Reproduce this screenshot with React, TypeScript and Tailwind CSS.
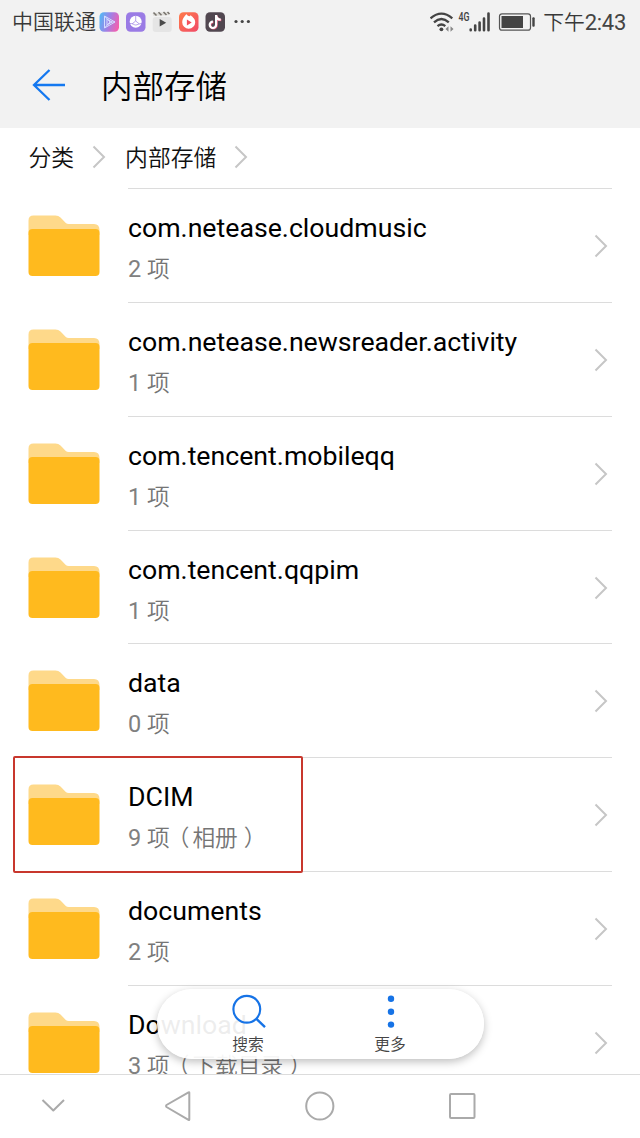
interface Folder {
  name: string;
  count: number;
  note?: string;
  highlighted?: boolean;
}

const folders: Folder[] = [
  { name: "com.netease.cloudmusic", count: 2 },
  { name: "com.netease.newsreader.activity", count: 1 },
  { name: "com.tencent.mobileqq", count: 1 },
  { name: "com.tencent.qqpim", count: 1 },
  { name: "data", count: 0 },
  { name: "DCIM", count: 9, note: "相册", highlighted: true },
  { name: "documents", count: 2 },
  { name: "Download", count: 3, note: "下载目录" },
];

function AppBadges() {
  return (
    <svg className="ml-[3px] h-[22px] w-[154px] shrink-0" viewBox="0 0 154 22">
      <defs>
        <linearGradient id="video" x1="0" x2="1" y1="0.3" y2="0.6">
          <stop offset="0" stopColor="#58b5f5" />
          <stop offset="0.5" stopColor="#a180e5" />
          <stop offset="1" stopColor="#f45fae" />
        </linearGradient>
        <linearGradient id="fire" x1="0" x2="1" y1="0" y2="1">
          <stop offset="0" stopColor="#ff7b49" />
          <stop offset="1" stopColor="#f04a68" />
        </linearGradient>
      </defs>
      <rect fill="url(#video)" height="19.5" rx="4.5" width="19.5" x="0.5" y="1.2" />
      <path d="M5.500 5v12l10.500-6zM8 8v6l5-3zM5.500 5l5.500 6-5.500 6M16 11h-5" fill="none" stroke="#d4dcff" strokeLinejoin="round" strokeWidth="1" />
      <rect fill="#9a7be5" height="19.5" rx="4.5" width="19.5" x="27" y="1.2" />
      <circle cx="36.700" cy="10.800" fill="#fff" r="6" />
      <path d="M30.500 12.500c3-.5 4.500 1.500 6.200 1.500s3.200-1.500 6.200-1.500M36.700 4.500v5.500l3.500 2.800M36.700 10l-3.500 2.800" fill="none" stroke="#9a7be5" strokeWidth="0.700" />
      <rect fill="#e5e5e5" height="15" rx="3" width="19" x="53.700" y="6" />
      <path d="M53.500 2l16-1 1 3-16 1z" fill="#deddd9" />
      <path d="M54.500 1.500l3 3M59.500 1.200l3 3M64.500 1l3 3M68.500 1l2 2" stroke="#77736d" strokeWidth="1.500" />
      <path d="M60.700 8v7.500l6.500-3.700z" fill="#4b4b4b" />
      <rect fill="url(#fire)" height="19.5" rx="4.5" width="19.5" x="80" y="1.200" />
      <path d="M87.500 3c.4 1.500 1.800 2 3 2.300l1.300-1.100c.6 1 4.400 3 4.400 7a6.500 6.500 0 01-13 0c0-3.300 1.800-5.300 4.300-8.200z" fill="#fff" />
      <circle cx="89.700" cy="11.500" fill="#fff" r="4.300" />
      <path d="M87.900 8.500v6l4.800-3z" fill="#f4505c" />
      <rect fill="#514750" height="19.5" rx="4.5" width="19.5" x="106.500" y="1.200" />
      <path d="M117.700 4.500v9.800a3.200 3.200 0 11-3.200-3.200M117.700 5c.3 2.600 2 4 4.600 4.200" fill="none" stroke="#e65b7c" strokeWidth="2.200" />
      <path d="M117.100 4v9.800a3.200 3.200 0 11-3.200-3.200M117.100 4.500c.3 2.600 2 4 4.600 4.200" fill="none" stroke="#fff" strokeWidth="2.200" />
      <circle cx="137" cy="10.500" fill="#454545" r="1.600" />
      <circle cx="143.200" cy="10.500" fill="#454545" r="1.600" />
      <circle cx="149.400" cy="10.500" fill="#454545" r="1.600" />
    </svg>
  );
}

function Signals() {
  return (
    <svg className="mt-[-4px] h-[28px] w-[110px] shrink-0" viewBox="0 0 110 28">
      <g fill="none" stroke="#444" strokeWidth="2.300">
        <path d="M0.500 12.300q10.900-9.400 21.800 0" />
        <path d="M4 16.300q7.400-6.500 14.800 0" />
        <path d="M7.500 20.100q3.900-3.200 7.800 0" />
      </g>
      <circle cx="11.400" cy="23.300" fill="#444" r="1.900" />
      <path d="M18.500 20.300v5.400l-3-2.700zM20.500 20.300v5.400l3-2.700z" fill="#888" />
      <text fill="#444" fontFamily="Roboto, sans-serif" fontSize="13" fontWeight="500" lengthAdjust="spacingAndGlyphs" textLength="11" x="28.500" y="14.700">
        4G
      </text>
      <path d="M40.700 23.500v.7M45.200 19.500v4.700M49.600 16.500v7.700M54 12.500v11.700M58.500 7.500v16.700" stroke="#444" strokeLinecap="round" strokeWidth="2.600" />
      <rect fill="none" height="16.400" rx="2.500" stroke="#555" strokeWidth="1.200" width="31" x="69.500" y="7.800" />
      <rect fill="#444" height="12" width="21.500" x="71.500" y="10" />
      <rect fill="#444" height="9.500" rx="1" width="2.400" x="102.300" y="11.300" />
    </svg>
  );
}

function StatusBar() {
  return (
    <div className="flex h-11 items-center justify-between pr-[14px] pl-3 font-[350] text-[#383838]">
      <div className="flex items-center">
        <span className="mt-px w-[84px] whitespace-nowrap text-[21px] leading-none">中国联通</span>
        <AppBadges />
      </div>
      <div className="flex items-center gap-[3px]">
        <Signals />
        <span className="mt-px whitespace-nowrap text-[20.800px] leading-none">
          下午<span className="font-normal text-[#444] text-[22px] tracking-[-0.300px]">2:43</span>
        </span>
      </div>
    </div>
  );
}

function Chevron({ className }: { className: string }) {
  return (
    <svg className={className} fill="none" viewBox="0 0 14 24">
      <path d="M1.500 1.500L12 12 1.500 22.500" stroke="#c6c6c6" strokeWidth="2" />
    </svg>
  );
}

function FolderIcon() {
  return (
    <svg className="h-[62px] w-[72px] shrink-0" viewBox="0 0 72 62">
      <path d="M.5 20V5.500q0-5 5-5h22q3 0 5 2l5.300 5.500q1 1 3 1h25.200q5.500 0 5.500 6V20z" fill="#fed98a" />
      <rect fill="#ffba1e" height="47" rx="4" width="71" x=".5" y="14" />
    </svg>
  );
}

function FolderRow({ folder }: { folder: Folder }) {
  return (
    <div className="relative flex h-[113.800px] shrink-0 px-7">
      <div className="mt-[27px]">
        <FolderIcon />
      </div>
      <div className="ml-7 flex flex-1 justify-between border-[#dcdcdc] border-t">
        <div className="whitespace-nowrap pt-[22px]">
          <h2 className="text-[26.700px] text-black leading-[34px]">{folder.name}</h2>
          <p className="mt-[9px] font-[350] text-[#757575] text-[22.700px] leading-[30px]">
            <span className="font-normal text-[#808080] text-[23.500px]">{folder.count} </span>项
            {folder.note && (
              <>
                <span className="relative left-[-3px]">（</span>
                {folder.note}
                <span className="relative left-[6px]">）</span>
              </>
            )}
          </p>
        </div>
        <Chevron className="mt-[45px] mr-1 h-6 w-[14px]" />
      </div>
      {folder.highlighted && (
        <div className="absolute top-[-1px] left-[13px] z-10 h-[117px] w-[290px] rounded-[2px] border-2 border-[#c8372d]" />
      )}
    </div>
  );
}

function ActionPill() {
  return (
    <div className="absolute top-[989px] left-[157px] z-20 flex h-[70px] w-[327px] rounded-[35px] bg-white/93 font-[350] text-[#444] text-[15.800px] shadow-[0_3px_8px_rgba(0,0,0,0.25)]">
      <div className="ml-5 flex w-[142px] flex-col items-center">
        <svg className="mt-[5px] h-9 w-9" fill="none" viewBox="0 0 36 36">
          <circle cx="16.800" cy="15.200" r="13.400" stroke="#1673e6" strokeWidth="2.200" />
          <path d="M26.200 24.700l8.800 8.500" stroke="#1673e6" strokeWidth="2.400" />
        </svg>
        <span className="mt-[5px] leading-5">搜索</span>
      </div>
      <div className="flex w-[142px] flex-col items-center">
        <svg className="mt-[5px] h-9 w-9" fill="#1673e6" viewBox="0 0 36 36">
          <circle cx="19" cy="4.800" r="3.200" />
          <circle cx="19" cy="17.800" r="3.200" />
          <circle cx="19" cy="30.600" r="3.200" />
        </svg>
        <span className="mt-[5px] leading-5">更多</span>
      </div>
    </div>
  );
}

function NavigationBar() {
  return (
    <nav className="h-16 shrink-0 border-[#dcdcdc] border-t bg-white">
      <svg className="h-[63px] w-full" fill="none" stroke="#aaa" strokeLinejoin="round" strokeWidth="2" viewBox="0 0 640 63">
        <path d="M42.500 25L53.300 35.500 64 25" />
        <path d="M189.300 17.500v27q0 .8-.8.400L166.500 32q-1-1 0-2L188.500 17.300q.8-.4.800.2z" />
        <circle cx="319.800" cy="31" r="13.600" />
        <rect height="24" rx="1" width="24.500" x="450" y="19" />
      </svg>
    </nav>
  );
}

export default function App() {
  return (
    <div className="relative flex h-[1138px] w-[640px] flex-col overflow-hidden bg-white font-[Roboto,'Noto_Sans_CJK_SC',sans-serif]">
      <header className="h-32 shrink-0 bg-[#f2f2f2]">
        <StatusBar />
        <div className="flex h-[84px] items-center pl-8">
          <svg className="mt-[-2px] h-8 w-[34px]" fill="none" viewBox="0 0 34 32">
            <path d="M33 16H2M17.500 1L2 16l15.500 15" stroke="#1478f0" strokeWidth="2.300" />
          </svg>
          <h1 className="mt-1 ml-[35px] font-[350] text-[31.500px] text-black leading-none">内部存储</h1>
        </div>
      </header>
      <div className="flex h-[60.200px] shrink-0 items-center pl-[28.500px] font-[350] text-[#111] text-[22.800px]">
        <span className="mt-px">分类</span>
        <Chevron className="mt-[-2px] ml-[18px] h-6 w-[14px]" />
        <span className="mt-px ml-[19px]">内部存储</span>
        <Chevron className="mt-[-2px] ml-[18px] h-6 w-[14px]" />
      </div>
      <main className="flex h-[885.800px] shrink-0 flex-col overflow-hidden">
        {folders.map((folder) => (
          <FolderRow folder={folder} key={folder.name} />
        ))}
      </main>
      <NavigationBar />
      <ActionPill />
    </div>
  );
}
